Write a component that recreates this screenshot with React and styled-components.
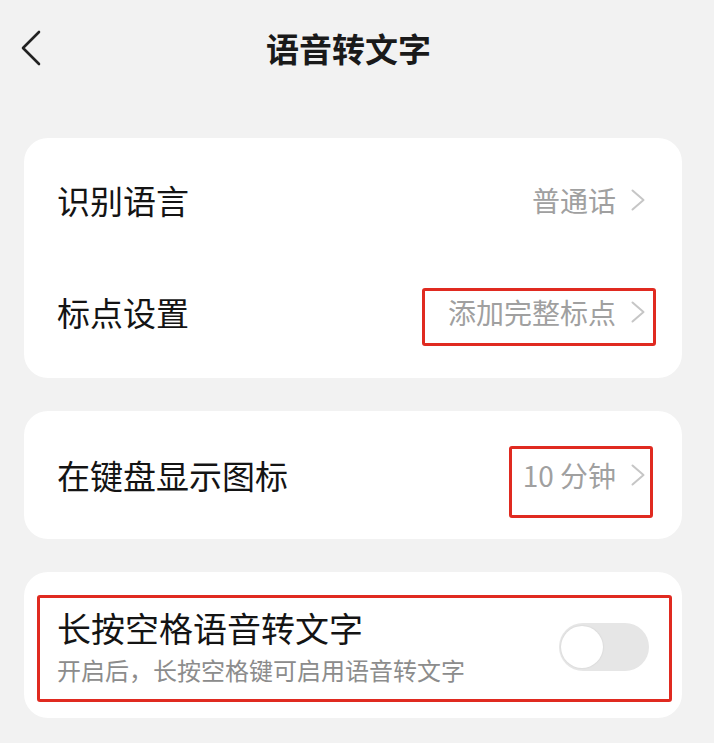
import React from "react";
import styled, { createGlobalStyle } from "styled-components";

const GlobalStyle = createGlobalStyle`
  body {
    margin: 0;
    background: #f2f2f2;
    font-family: "Noto Sans CJK SC", "Noto Sans", sans-serif;
  }
`;

const Page = styled.div`
  width: 714px;
  min-height: 743px;
  background: #f2f2f2;
  box-sizing: border-box;
  padding: 0 32px 0 24px;
`;

const Header = styled.header`
  display: grid;
  grid-template-columns: 1fr auto 1fr;
  align-items: center;
  height: 96px;
  margin: 0 -32px 0 -24px;
  padding: 0 35px 0 18px;
`;

const BackButton = styled.button`
  display: flex;
  align-items: center;
  justify-self: start;
  border: 0;
  padding: 0;
  background: none;
`;

const Title = styled.h1`
  margin: 0;
  font-size: 33px;
  font-weight: 700;
  color: #1a1a1a;
`;

const Stack = styled.div`
  display: flex;
  flex-direction: column;
  gap: 33px;
  margin-top: 42px;
`;

const Card = styled.section`
  background: #fff;
  border-radius: 24px;
  padding: ${({ $padding }) => $padding || "6px 37px 10px 33px"};
`;

const Row = styled.div`
  display: flex;
  align-items: center;
  justify-content: space-between;
  height: 112px;
`;

const Label = styled.span`
  font-size: 33px;
  color: #141414;
`;

const Value = styled.div`
  position: relative;
  display: flex;
  align-items: center;
  gap: 15px;
  height: 40px;
  font-size: 28px;
  color: #a0a0a0;

  ${({ $mark }) =>
    $mark &&
    `
    &::after {
      content: "";
      position: absolute;
      top: ${$mark[0]}px;
      right: ${$mark[1]}px;
      bottom: ${$mark[2]}px;
      left: ${$mark[3]}px;
      border: 3px solid #e02a20;
      border-radius: 3px;
      pointer-events: none;
    }
  `}
`;

const SwitchRow = styled.div`
  position: relative;
  display: flex;
  align-items: center;
  justify-content: space-between;

  &::after {
    content: "";
    position: absolute;
    top: -13px;
    right: -23px;
    bottom: -17px;
    left: -20px;
    border: 3px solid #e02a20;
    border-radius: 3px;
    pointer-events: none;
  }
`;

const TextBlock = styled.div`
  display: flex;
  flex-direction: column;
  gap: 7px;
`;

const SwitchTitle = styled.span`
  font-size: 34px;
  line-height: 40px;
  color: #141414;
`;

const SwitchHint = styled.span`
  font-size: 24px;
  line-height: 30px;
  color: #8c8c8c;
`;

const Toggle = styled.div`
  position: relative;
  width: 90px;
  height: 48px;
  border-radius: 24px;
  background: #e6e6e6;
  flex-shrink: 0;

  &::before {
    content: "";
    position: absolute;
    top: 3px;
    left: 2px;
    width: 42px;
    height: 42px;
    border-radius: 50%;
    background: #fff;
    box-shadow: 0 0 2px rgba(0, 0, 0, 0.12);
  }
`;

const Chevron = () => (
  <svg width="14" height="22" viewBox="0 0 14 22" fill="none">
    <path d="M1.5 1.5 L12.5 11 L1.5 20.5" stroke="#c6c6c6" strokeWidth="2" strokeLinecap="round" strokeLinejoin="round" />
  </svg>
);

const BackIcon = () => (
  <svg width="24" height="36" viewBox="0 0 24 36" fill="none">
    <path d="M21 2 L5 18 L21 34" stroke="#222" strokeWidth="2.6" strokeLinecap="round" strokeLinejoin="round" />
  </svg>
);

const SettingRow = ({ label, value, mark }) => (
  <Row>
    <Label>{label}</Label>
    <Value $mark={mark}>
      <span>{value}</span>
      <Chevron />
    </Value>
  </Row>
);

export default function App() {
  return (
    <>
      <GlobalStyle />
      <Page>
        <Header>
          <BackButton aria-label="返回">
            <BackIcon />
          </BackButton>
          <Title>语音转文字</Title>
          <span />
        </Header>
        <Stack>
          <Card>
            <SettingRow label="识别语言" value="普通话" />
            <SettingRow label="标点设置" value="添加完整标点" mark={[-4, -11, -14, -26]} />
          </Card>
          <Card $padding="8px 37px 8px 33px">
            <SettingRow label="在键盘显示图标" value="10 分钟" mark={[-9, -8, -23, -14]} />
          </Card>
          <Card $padding="36px 33px 33px 33px">
            <SwitchRow>
              <TextBlock>
                <SwitchTitle>长按空格语音转文字</SwitchTitle>
                <SwitchHint>开启后，长按空格键可启用语音转文字</SwitchHint>
              </TextBlock>
              <Toggle />
            </SwitchRow>
          </Card>
        </Stack>
      </Page>
    </>
  );
}
